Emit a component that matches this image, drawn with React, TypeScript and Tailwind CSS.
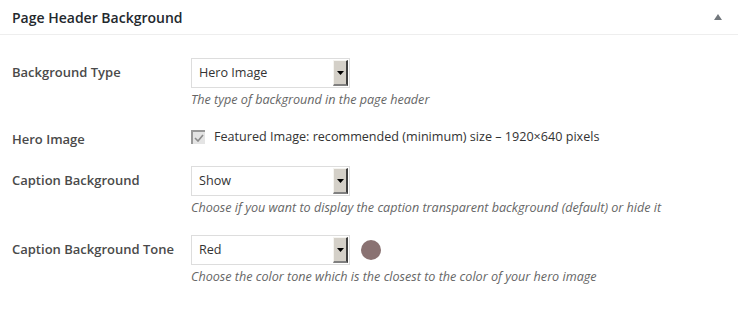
import React from 'react';

const font = { fontFamily: '"Open Sans", "Liberation Sans", sans-serif' };

type SelectProps = { value: string };

const FakeSelect: React.FC<SelectProps> = ({ value }) => (
  <div className="flex h-[30px] w-[159px] items-stretch border border-[#dddddd] bg-white">
    <div className="flex flex-1 items-center pl-[7px] text-[12.6px] text-[#333333]">{value}</div>
    <div className="my-[1px] mr-[1px] flex w-[15px] items-center justify-center border-t border-l border-t-[#f5f4f0] border-l-[#f5f4f0] border-r-2 border-b-2 border-r-[#404040] border-b-[#808080] bg-[#d4d0c8]">
      <svg width="7" height="4" viewBox="0 0 7 4">
        <polygon points="0,0 7,0 3.5,4" fill="#000" />
      </svg>
    </div>
  </div>
);

const Row: React.FC<{ label: string; children: React.ReactNode; className?: string }> = ({ label, children, className }) => (
  <div className={`flex ${className ?? ''}`}>
    <div className="w-[179px] shrink-0 pt-[5px] text-[13px] font-semibold text-[#4a4a4a]">{label}</div>
    <div className="flex flex-col">{children}</div>
  </div>
);

const App: React.FC = () => {
  return (
    <div className="h-[312px] w-[738px] bg-white" style={font}>
      <div className="flex h-[35px] items-center border-b border-[#eeeeee] pl-[12px] pr-[16px]">
        <h2 className="flex-1 text-[14px] font-semibold text-[#23282d]">Page Header Background</h2>
        <svg width="8" height="6" viewBox="0 0 8 6">
          <polygon points="4,0 8,6 0,6" fill="#72777c" />
        </svg>
      </div>

      <div className="pl-[12px] pt-[23px]">
        <Row label="Background Type">
          <FakeSelect value="Hero Image" />
          <p className="mt-[3px] text-[12.6px] italic text-[#666666]">The type of background in the page header</p>
        </Row>

        <Row label="Hero Image" className="mt-[15px]">
          <div className="flex items-center pt-[3px]">
            <div className="flex h-[14px] w-[14px] items-center justify-center border-t-2 border-l-2 border-t-[#999999] border-l-[#999999] bg-[#e4e4e4]">
              <svg width="10" height="8" viewBox="0 0 10 8">
                <polyline points="1,4 4,7 9,1" fill="none" stroke="#8c8c8c" strokeWidth="1.6" />
              </svg>
            </div>
            <span className="ml-[9px] text-[12.6px] text-[#333333]">Featured Image: recommended (minimum) size – 1920×640 pixels</span>
          </div>
        </Row>

        <Row label="Caption Background" className="mt-[17px]">
          <FakeSelect value="Show" />
          <p className="mt-[3px] text-[12.6px] italic text-[#666666]">Choose if you want to display the caption transparent background (default) or hide it</p>
        </Row>

        <Row label="Caption Background Tone" className="mt-[17px]">
          <div className="flex items-center">
            <FakeSelect value="Red" />
            <div className="ml-[11px] h-[20px] w-[20px] rounded-full bg-[#8a7272]" />
          </div>
          <p className="mt-[3px] text-[12.6px] italic text-[#666666]">Choose the color tone which is the closest to the color of your hero image</p>
        </Row>
      </div>
    </div>
  );
};

export default App;
